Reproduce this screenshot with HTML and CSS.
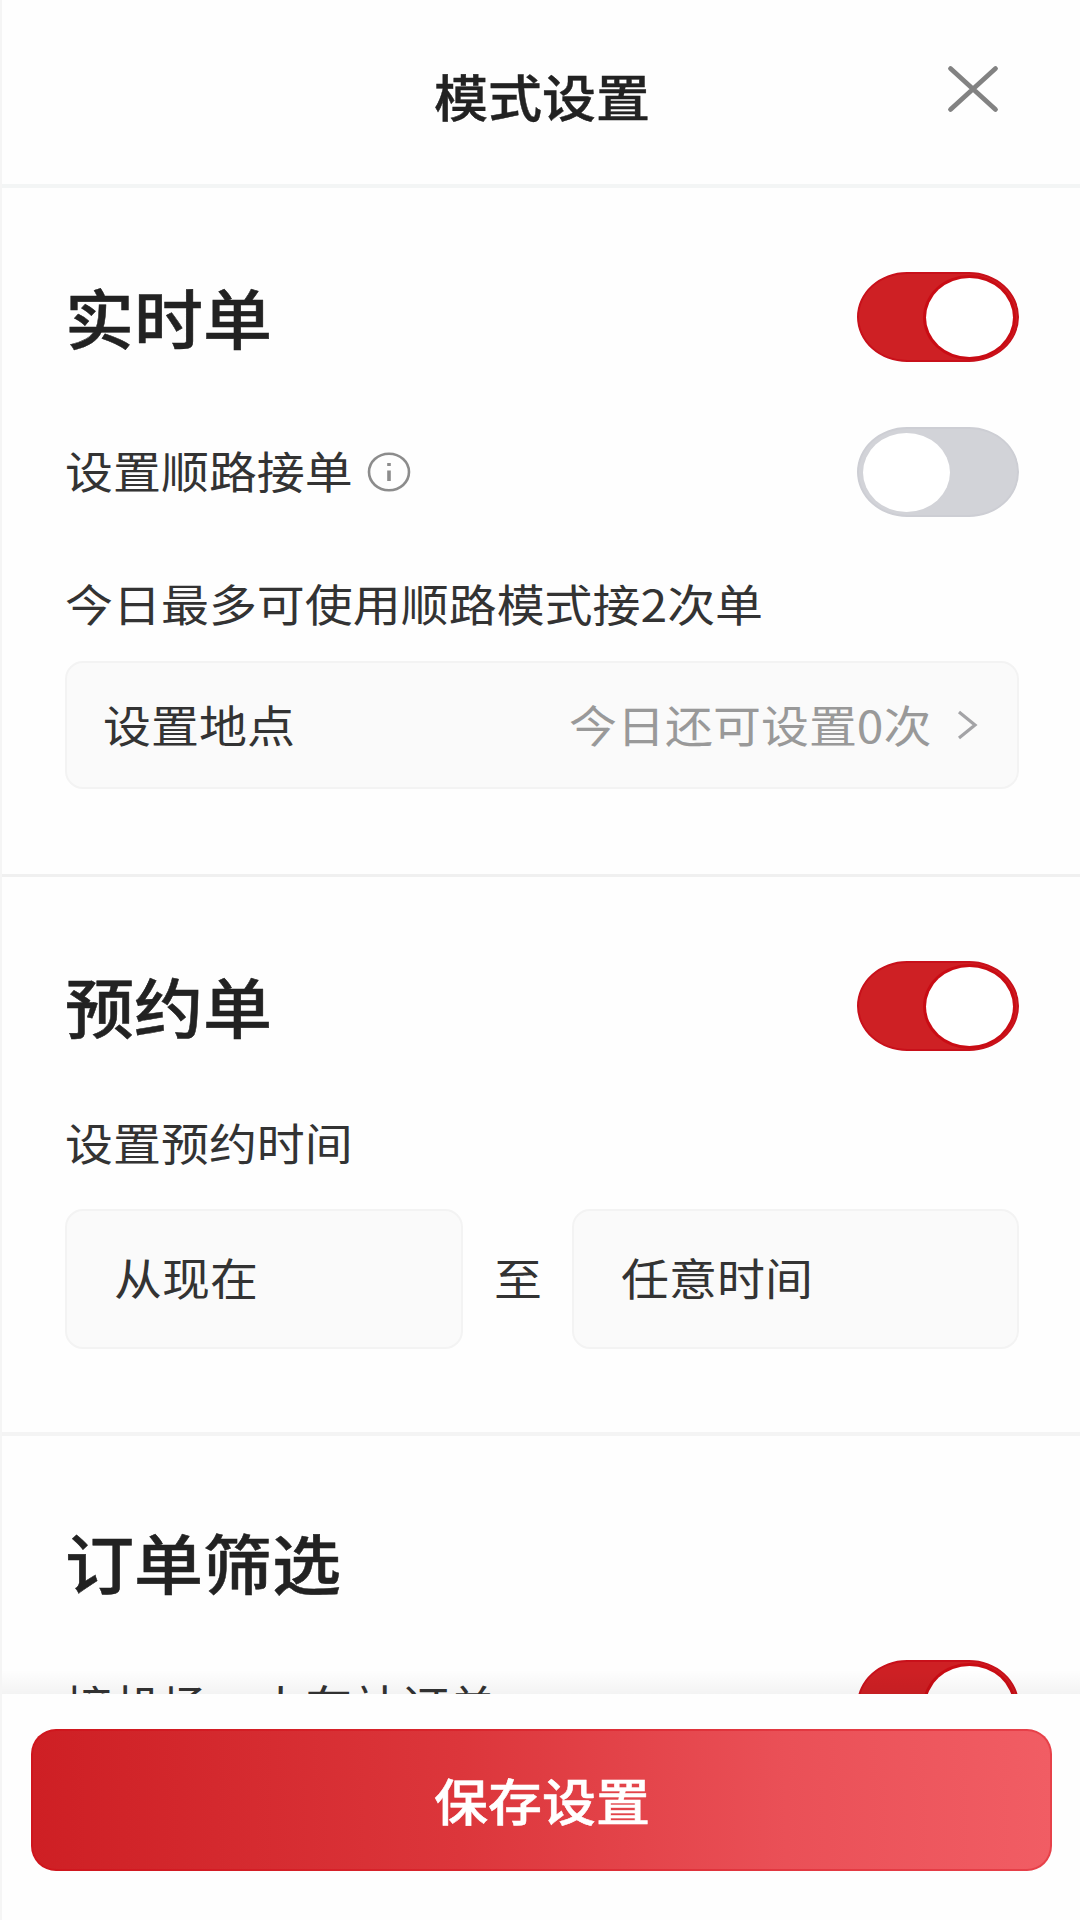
FILE: index.html
```html
<!DOCTYPE html>
<html lang="zh-CN">
<head>
<meta charset="utf-8">
<title>模式设置</title>
<link rel="stylesheet" href="styles.css">
</head>
<body>
<main class="sheet">
  <header class="header">
    <h1 class="title">模式设置</h1>
    <svg class="close" viewBox="0 0 54 50"><path d="M4.500 4.500L49.500 45.500M49.500 4.500L4.500 45.500"/></svg>
  </header>
  <div class="content">
    <section class="section realtime">
      <div class="row heading-row">
        <h2 class="heading">实时单</h2>
        <span class="switch on"><span class="knob"></span></span>
      </div>
      <div class="row route-row">
        <span class="label-group">
          <span class="text">设置顺路接单</span>
          <svg class="info" viewBox="0 0 44 42"><ellipse cx="22" cy="21" rx="20" ry="18.300"/><path d="M22 19.500V30M22 12V15"/></svg>
        </span>
        <span class="switch"><span class="knob"></span></span>
      </div>
      <p class="text quota">今日最多可使用顺路模式接2次单</p>
      <div class="box place">
        <span class="text">设置地点</span>
        <span class="place-value">
          <span class="text muted">今日还可设置0次</span>
          <svg class="chevron" viewBox="0 0 22 32"><path d="M3 3L19 16L3 29"/></svg>
        </span>
      </div>
    </section>
    <section class="section booking">
      <div class="row heading-row">
        <h2 class="heading">预约单</h2>
        <span class="switch on"><span class="knob"></span></span>
      </div>
      <p class="text time-label">设置预约时间</p>
      <div class="range">
        <div class="box field"><span class="text">从现在</span></div>
        <span class="text to">至</span>
        <div class="box field"><span class="text">任意时间</span></div>
      </div>
    </section>
    <section class="section filter">
      <h2 class="heading">订单筛选</h2>
      <div class="row station-row">
        <span class="text">接机场、火车站订单</span>
        <span class="switch on"><span class="knob"></span></span>
      </div>
    </section>
  </div>
  <footer class="footer">
    <button class="save"><span class="save-text">保存设置</span></button>
  </footer>
</main>
</body>
</html>
```
FILE: styles.css
```css
* {
  box-sizing: border-box;
  margin: 0;
  padding: 0;
}

body {
  width: 1080px;
  height: 1920px;
  overflow: hidden;
  background: #fefefe;
  color: #222;
  font-family: "Noto Sans CJK SC", sans-serif;
}

.sheet {
  display: flex;
  flex-direction: column;
  height: 1920px;
  border-left: 2px solid #f5f5f5;
}

.header {
  display: grid;
  grid-template-columns: 1fr auto 1fr;
  align-items: start;
  height: 188px;
  padding: 60px 0 0 2px;
  border-bottom: 4px solid #f3f5f5;
}

.title {
  grid-column: 2;
  font-size: 50px;
  line-height: 70px;
  font-weight: 500;
  transform: scaleX(1.08);
  -webkit-text-stroke: 0.4px currentColor;
}

.close {
  width: 54px;
  height: 50px;
  margin-top: 4px;
  margin-right: 80px;
  justify-self: end;
}

.close path {
  fill: none;
  stroke: #828282;
  stroke-width: 4.8;
  stroke-linecap: round;
}

.content {
  position: relative;
  height: 1506px;
  overflow: hidden;
}

/* soft shade above the fixed footer */
.content::after {
  content: "";
  position: absolute;
  left: 0;
  right: 0;
  bottom: 0;
  height: 24px;
  background: linear-gradient(rgba(0, 0, 0, 0), rgba(0, 0, 0, 0.045));
}

.section {
  padding: 0 61px 0 63px;
}

.realtime {
  height: 689px;
  padding-top: 83px;
  border-bottom: 3px solid #f0f0f0;
}

.booking {
  height: 559px;
  padding-top: 83px;
  border-bottom: 4px solid #f4f4f4;
}

.filter {
  padding-top: 81px;
}

.row {
  display: flex;
  align-items: center;
  justify-content: space-between;
  height: 92px;
}

.heading {
  font-size: 64.500px;
  line-height: 88px;
  padding-bottom: 3px;
  font-weight: 500;
  transform: scaleX(1.07);
  transform-origin: left;
  -webkit-text-stroke: 0.5px currentColor;
}

.text {
  font-size: 44px;
  line-height: 64px;
  color: #333;
  white-space: nowrap;
  transform: scaleX(1.09);
  transform-origin: left;
}

.route-row {
  margin-top: 63px;
}

.label-group {
  display: flex;
  align-items: center;
}

.label-group .text,
.field .text,
.range .to {
  padding-bottom: 4px;
}

.info {
  width: 44px;
  height: 42px;
  margin-left: 38px;
}

.info ellipse,
.info path {
  fill: none;
  stroke: #8c8c8c;
  stroke-width: 2.6;
}

.info path {
  stroke-width: 3.6;
}

.switch {
  display: flex;
  align-items: center;
  flex: none;
  width: 162px;
  height: 90px;
  padding: 0 4px;
  border: 2px solid #cdced4;
  border-radius: 50px / 45px;
  background: #d2d3d8;
}

.switch.on {
  justify-content: flex-end;
  border-color: #c8101a;
  background: #ce2024;
}

.knob {
  width: 87px;
  height: 79px;
  border-radius: 50%;
  background: #fff;
}

.switch.on .knob {
  box-shadow: 0 0 0 3px #c90c14;
}

.quota {
  margin-top: 53px;
}

.box {
  display: flex;
  align-items: center;
  border: 2px solid #f3f3f3;
  border-radius: 18px;
  background: #fafafa;
}

.place {
  justify-content: space-between;
  height: 128px;
  margin-top: 26px;
  padding: 0 39px 0 36px;
}

.place .text {
  padding-bottom: 2px;
}

.place-value {
  display: flex;
  align-items: center;
}

.muted {
  color: #999;
  transform-origin: right;
}

.chevron {
  width: 22px;
  height: 32px;
  margin-left: 25px;
}

.chevron path {
  fill: none;
  stroke: #a3a3a6;
  stroke-width: 3.2;
}

.time-label {
  margin-top: 58px;
}

.range {
  display: grid;
  grid-template-columns: 398px 109px 447px;
  align-items: center;
  margin-top: 35px;
}

.field {
  height: 140px;
  padding-left: 47px;
}

.to {
  justify-self: center;
  transform-origin: center;
}

.station-row {
  margin-top: 51px;
}

.station-row .text {
  padding-bottom: 3px;
}

.footer {
  flex: 1;
  padding: 35px 28px 0 29px;
}

.save {
  display: flex;
  align-items: center;
  justify-content: center;
  width: 1021px;
  height: 142px;
  border: 2px solid rgba(210, 0, 12, 0.3);
  border-radius: 25px;
  background: linear-gradient(90deg, #ce1f24, #dc363b 42%, #ea5057 74%, #f15d64) border-box;
  color: #fff;
  font-family: inherit;
}

.save-text {
  padding-bottom: 2px;
  font-size: 50px;
  line-height: 70px;
  font-weight: 500;
  transform: scaleX(1.08);
  -webkit-text-stroke: 0.5px currentColor;
}
```
